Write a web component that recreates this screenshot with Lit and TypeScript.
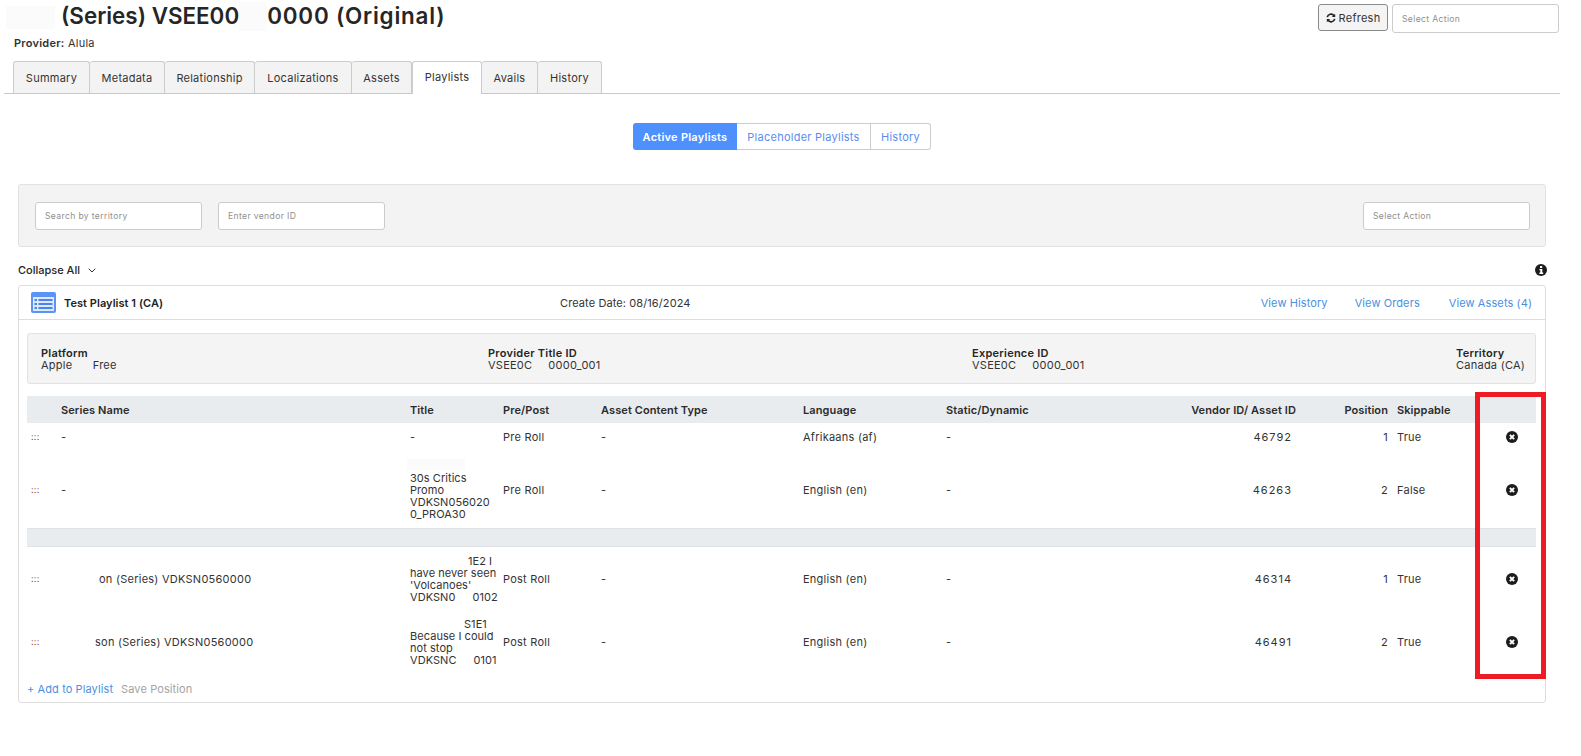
import { html, css, LitElement, svg } from "lit";
import { customElement } from "lit/decorators.js";

const TABS = ["Summary", "Metadata", "Relationship", "Localizations", "Assets", "Playlists", "Avails", "History"];

const closeIcon = svg`<circle cx="6" cy="6" r="6" fill="#1c1c1c"/><path d="M3.9 3.9l4.2 4.2M8.1 3.9l-4.2 4.2" stroke="#fff" stroke-width="2"/>`;

@customElement("app-root")
export class AppRoot extends LitElement {
  row(cls: string, series: unknown, title: unknown, prePost: string, lang: string, vendor: string, pos: string, skip: string) {
    return html`
      <div class="grid row ${cls}">
        <span class="handle">:::</span>
        <span>${series}</span>
        <span class="title-cell">${title}</span>
        <span>${prePost}</span>
        <span>-</span>
        <span>${lang}</span>
        <span>-</span>
        <span class="num vendor">${vendor}</span>
        <span class="num">${pos}</span>
        <span class="skip">${skip}</span>
        <span class="act"><svg width="12" height="12" viewBox="0 0 12 12">${closeIcon}</svg></span>
      </div>
    `;
  }

  render() {
    return html`
      <header class="top">
        <div>
          <h1><span class="mask m-a"></span>(Series) VSEE00<span class="mask m-b"></span><span class="tail">0000 (Original)</span></h1>
          <div class="provider"><b>Provider:</b> Alula</div>
        </div>
        <div class="top-actions">
          <button class="refresh">
            <svg width="10" height="10" viewBox="0 0 12 12" fill="none" stroke="#222" stroke-width="2">
              <path d="M1.5 5A4.6 4.6 0 0 1 9.6 3.2"/><path d="M10.5 7A4.6 4.6 0 0 1 2.4 8.8"/>
              <path d="M11 .8v4H7z" fill="#222" stroke="none"/><path d="M1 11.2v-4h4z" fill="#222" stroke="none"/>
            </svg>
            Refresh
          </button>
          <div class="field top-select">Select Action</div>
        </div>
      </header>

      <nav class="tabs">
        ${TABS.map((t) => html`<div class="tab ${t === "Playlists" ? "on" : ""}">${t}</div>`)}
      </nav>

      <main>
        <div class="seg-wrap">
          <div class="seg">
            <div class="seg-item active">Active Playlists</div>
            <div class="seg-item ph">Placeholder Playlists</div>
            <div class="seg-item hist">History</div>
          </div>
        </div>

        <section class="filters">
          <div class="field f1">Search by territory</div>
          <div class="field f2">Enter vendor ID</div>
          <div class="field f3">Select Action</div>
        </section>

        <div class="collapse">
          <span>Collapse All
            <svg class="chev" width="8" height="5" viewBox="0 0 8 5" fill="none" stroke="#333"><path d="M.7.7L4 4l3.3-3.3"/></svg>
          </span>
          <svg width="12" height="12" viewBox="0 0 12 12">
            <circle cx="6" cy="6" r="6" fill="#1c1c1c"/>
            <rect x="5" y="2" width="2.2" height="2" fill="#fff"/>
            <path d="M4.4 5h2.9v3.6h.9V10H4.4V8.6h.9V6.3h-.9z" fill="#fff"/>
          </svg>
        </div>

        <section class="card">
          <div class="card-head">
            <div class="card-title">
              <svg width="25" height="21" viewBox="0 0 25 21">
                <rect width="25" height="21" rx="2" fill="#5b93f7"/>
                <rect x="2" y="5" width="21" height="14" fill="#dfe9fc"/>
                <g fill="#4a84ee">
                  <rect x="3.5" y="7" width="2.5" height="2"/><rect x="7.5" y="7" width="14" height="2"/>
                  <rect x="3.5" y="11" width="2.5" height="2"/><rect x="7.5" y="11" width="14" height="2"/>
                  <rect x="3.5" y="15" width="2.5" height="2"/><rect x="7.5" y="15" width="14" height="2"/>
                </g>
              </svg>
              <b>Test Playlist 1 (CA)</b>
            </div>
            <div class="create">Create Date: 08/16/2024</div>
            <div class="links">
              <a class="l1">View History</a>
              <a class="l2">View Orders</a>
              <a class="l3">View Assets (4)</a>
            </div>
          </div>

          <div class="info">
            <div class="i1"><b>Platform</b><br />Apple<span class="gap g16"></span> Free</div>
            <div class="i2"><b>Provider Title ID</b><br />VSEE0C<span class="gap g12"></span>0000_001</div>
            <div class="i3"><b>Experience ID</b><br />VSEE0C<span class="gap g12"></span>0000_001</div>
            <div class="i4"><b>Territory</b><br />Canada (CA)</div>
          </div>

          <div class="grid thead">
            <span></span>
            <span>Series Name</span>
            <span>Title</span>
            <span>Pre/Post</span>
            <span>Asset Content Type</span>
            <span>Language</span>
            <span>Static/Dynamic</span>
            <span class="num">Vendor ID/ Asset ID</span>
            <span class="num">Position</span>
            <span class="skip">Skippable</span>
            <span></span>
          </div>

          ${this.row("r1", "-", "-", "Pre Roll", "Afrikaans (af)", "46792", "1", "True")}
          ${this.row("r2", "-", html`<span class="mask line"></span><br />30s Critics<br />Promo<br />VDKSN056020<br />0_PROA30`, "Pre Roll", "English (en)", "46263", "2", "False")}
          <div class="divider"></div>
          ${this.row("r3", html`<span class="gap g31"></span>on (Series) VDKSN0560000`, html`<span class="gap g48"></span>1E2 I<br />have never seen<br />'Volcanoes'<br />VDKSN0<span class="gap g10"></span>0102`, "Post Roll", "English (en)", "46314", "1", "True")}
          ${this.row("r3", html`<span class="gap g27"></span>son (Series) VDKSN0560000`, html`<span class="gap g46"></span>S1E1<br />Because I could<br />not stop<br />VDKSNC<span class="gap g10"></span>0101`, "Post Roll", "English (en)", "46491", "2", "True")}

          <div class="foot">
            <a>+ Add to Playlist</a>
            <span>Save Position</span>
          </div>
        </section>
      </main>

      <div class="callout"></div>
    `;
  }

  static styles = css`
    :host {
      display: block;
      position: relative;
      width: 1581px;
      height: 756px;
      overflow: hidden;
      background: #fff;
      color: #333;
      font: 11px/12px Inter, "Liberation Sans", sans-serif;
      letter-spacing: 0.25px;
    }
    b {
      font-weight: 600;
    }
    .top {
      display: flex;
      justify-content: space-between;
      height: 60px;
      padding-left: 14px;
      box-sizing: border-box;
    }
    h1 {
      margin: 0 0 0 -8px;
      height: 36px;
      font-size: 22.4px;
      font-weight: 600;
      line-height: 32px;
      letter-spacing: 0;
      color: #262626;
      white-space: nowrap;
    }
    .tail {
      letter-spacing: 0.8px;
    }
    .mask {
      display: inline-block;
      background: #fbfbfb;
    }
    .m-a {
      width: 49px;
      height: 23px;
      margin-right: 6px;
      vertical-align: -5px;
    }
    .m-b {
      width: 28px;
      height: 29px;
      vertical-align: -7px;
    }
    .provider {
      margin-top: 1px;
    }
    .top-actions {
      display: flex;
      gap: 4px;
      align-items: flex-start;
      padding: 4px 22px 0 0;
    }
    .refresh {
      display: flex;
      align-items: center;
      justify-content: center;
      gap: 3px;
      width: 70px;
      height: 27px;
      padding: 0;
      border: 1px solid #8a8a8a;
      border-radius: 3px;
      background: #f4f4f4;
      color: #333;
      font: inherit;
      letter-spacing: inherit;
    }
    .field {
      box-sizing: border-box;
      display: flex;
      align-items: center;
      width: 167px;
      height: 28px;
      padding-left: 9px;
      border: 1px solid #ccc;
      border-radius: 3px;
      background: #fff;
      color: #8f8f8f;
      font-size: 8.6px;
      letter-spacing: 0.35px;
    }
    .top-select {
      height: 29px;
    }
    .tabs {
      display: grid;
      grid-template-columns: 77px 75px 90px 97px 60px 70px 56px 64px;
      align-items: end;
      height: 33px;
      margin: 0 21px 0 4px;
      padding-left: 9px;
      border-bottom: 1px solid #c9c9c9;
    }
    .tab {
      display: flex;
      align-items: center;
      justify-content: center;
      box-sizing: border-box;
      height: 32px;
      border: 1px solid #ccc;
      border-bottom: 0;
      border-left-width: 0;
      border-radius: 3px 3px 0 0;
      background: #f3f3f3;
    }
    .tab:first-child {
      border-left-width: 1px;
    }
    .tab.on {
      height: 33px;
      margin-bottom: -1px;
      padding-bottom: 3px;
      border-left-width: 1px;
      background: #fff;
    }
    main {
      margin: 0 35px 0 18px;
    }
    .seg-wrap {
      display: flex;
      justify-content: center;
      padding-top: 29px;
    }
    .seg {
      display: grid;
      grid-template-columns: 104px 134px 60px;
      height: 27px;
      border-radius: 3px;
    }
    .seg-item {
      display: flex;
      align-items: center;
      justify-content: center;
      border: 1px solid #ccc;
      border-left: 0;
      color: #5b8def;
    }
    .seg-item.active {
      border: 0;
      border-radius: 3px 0 0 3px;
      background: #4d90fe;
      color: #fff;
      font-weight: 600;
    }
    .seg-item.hist {
      border-radius: 0 3px 3px 0;
    }
    .filters {
      display: flex;
      align-items: center;
      box-sizing: border-box;
      height: 63px;
      margin-top: 34px;
      padding: 0 15px 0 16px;
      border: 1px solid #e2e2e2;
      border-radius: 3px;
      background: #f3f3f3;
    }
    .f1 {
      margin-right: 16px;
    }
    .f3 {
      margin-left: auto;
    }
    .collapse {
      display: flex;
      align-items: center;
      justify-content: space-between;
      box-sizing: border-box;
      height: 38px;
      padding-top: 7px;
      margin-right: -1px;
      font-weight: 500;
      letter-spacing: 0;
      color: #262626;
    }
    .chev {
      margin-left: 5px;
      vertical-align: 1px;
    }
    .card {
      box-sizing: border-box;
      height: 418px;
      padding: 0 9px 0 8px;
      border: 1px solid #ddd;
      border-radius: 3px;
    }
    .card-head {
      display: grid;
      grid-template-columns: 529px 1fr auto;
      align-items: center;
      height: 33px;
      margin: 0 -9px 0 -8px;
      padding: 0 13px 0 12px;
      border-bottom: 1px solid #ddd;
    }
    .card-title {
      display: flex;
      align-items: center;
      gap: 8px;
      letter-spacing: 0.05px;
      color: #222;
    }
    .create {
      letter-spacing: 0.1px;
    }
    .links {
      display: flex;
      letter-spacing: 0.1px;
      color: #4a8fe0;
    }
    .l1 {
      margin-right: 27px;
    }
    .l2 {
      margin-right: 29px;
    }
    .info {
      display: grid;
      grid-template-columns: 447px 484px 484px auto;
      box-sizing: border-box;
      align-items: center;
      height: 51px;
      margin-top: 13px;
      padding: 0 14px 0 13px;
      border: 1px solid #e2e2e2;
      border-radius: 3px;
      background: #f4f4f4;
      white-space: nowrap;
    }
    .info b {
      color: #262626;
    }
    .gap {
      display: inline-block;
    }
    .g10 {
      width: 17px;
    }
    .g12 {
      width: 16px;
    }
    .g16 {
      width: 17px;
    }
    .g27 {
      width: 34px;
    }
    .g31 {
      width: 38px;
    }
    .g46 {
      width: 54px;
    }
    .g48 {
      width: 58px;
    }
    .grid {
      display: grid;
      grid-template-columns: 34px 349px 93px 98px 202px 143px 234px 116px 92px 87px 62px;
      align-items: center;
      white-space: nowrap;
    }
    .thead {
      height: 27px;
      margin-top: 12px;
      background: #e9ecef;
      font-weight: 600;
      letter-spacing: 0.1px;
      color: #2b2b2b;
    }
    .r1 {
      height: 28px;
    }
    .r2 {
      height: 77px;
    }
    .r3 {
      height: 63px;
    }
    .handle {
      padding-left: 4px;
      color: #8a4a3c;
      font-size: 9px;
    }
    .title-cell {
      display: block;
      letter-spacing: 0.05px;
    }
    .line {
      width: 58px;
      height: 11px;
      margin-left: -3px;
    }
    .num {
      text-align: right;
    }
    .vendor {
      padding-right: 4px;
      letter-spacing: 1px;
    }
    .skip {
      padding-left: 9px;
    }
    .act {
      display: flex;
      justify-content: center;
      padding-left: 12px;
    }
    .divider {
      box-sizing: border-box;
      height: 19px;
      border-top: 1px solid #dee2e6;
      border-bottom: 1px solid #dee2e6;
      background: #e9ecef;
    }
    .foot {
      display: flex;
      gap: 8px;
      margin-top: 10px;
      letter-spacing: 0.1px;
      color: #a3a3a3;
    }
    .foot a {
      color: #4a90e2;
    }
    .callout {
      position: absolute;
      left: 1475px;
      top: 392px;
      box-sizing: border-box;
      width: 71px;
      height: 287px;
      border: 5px solid #ed1c24;
    }
  `;
}
